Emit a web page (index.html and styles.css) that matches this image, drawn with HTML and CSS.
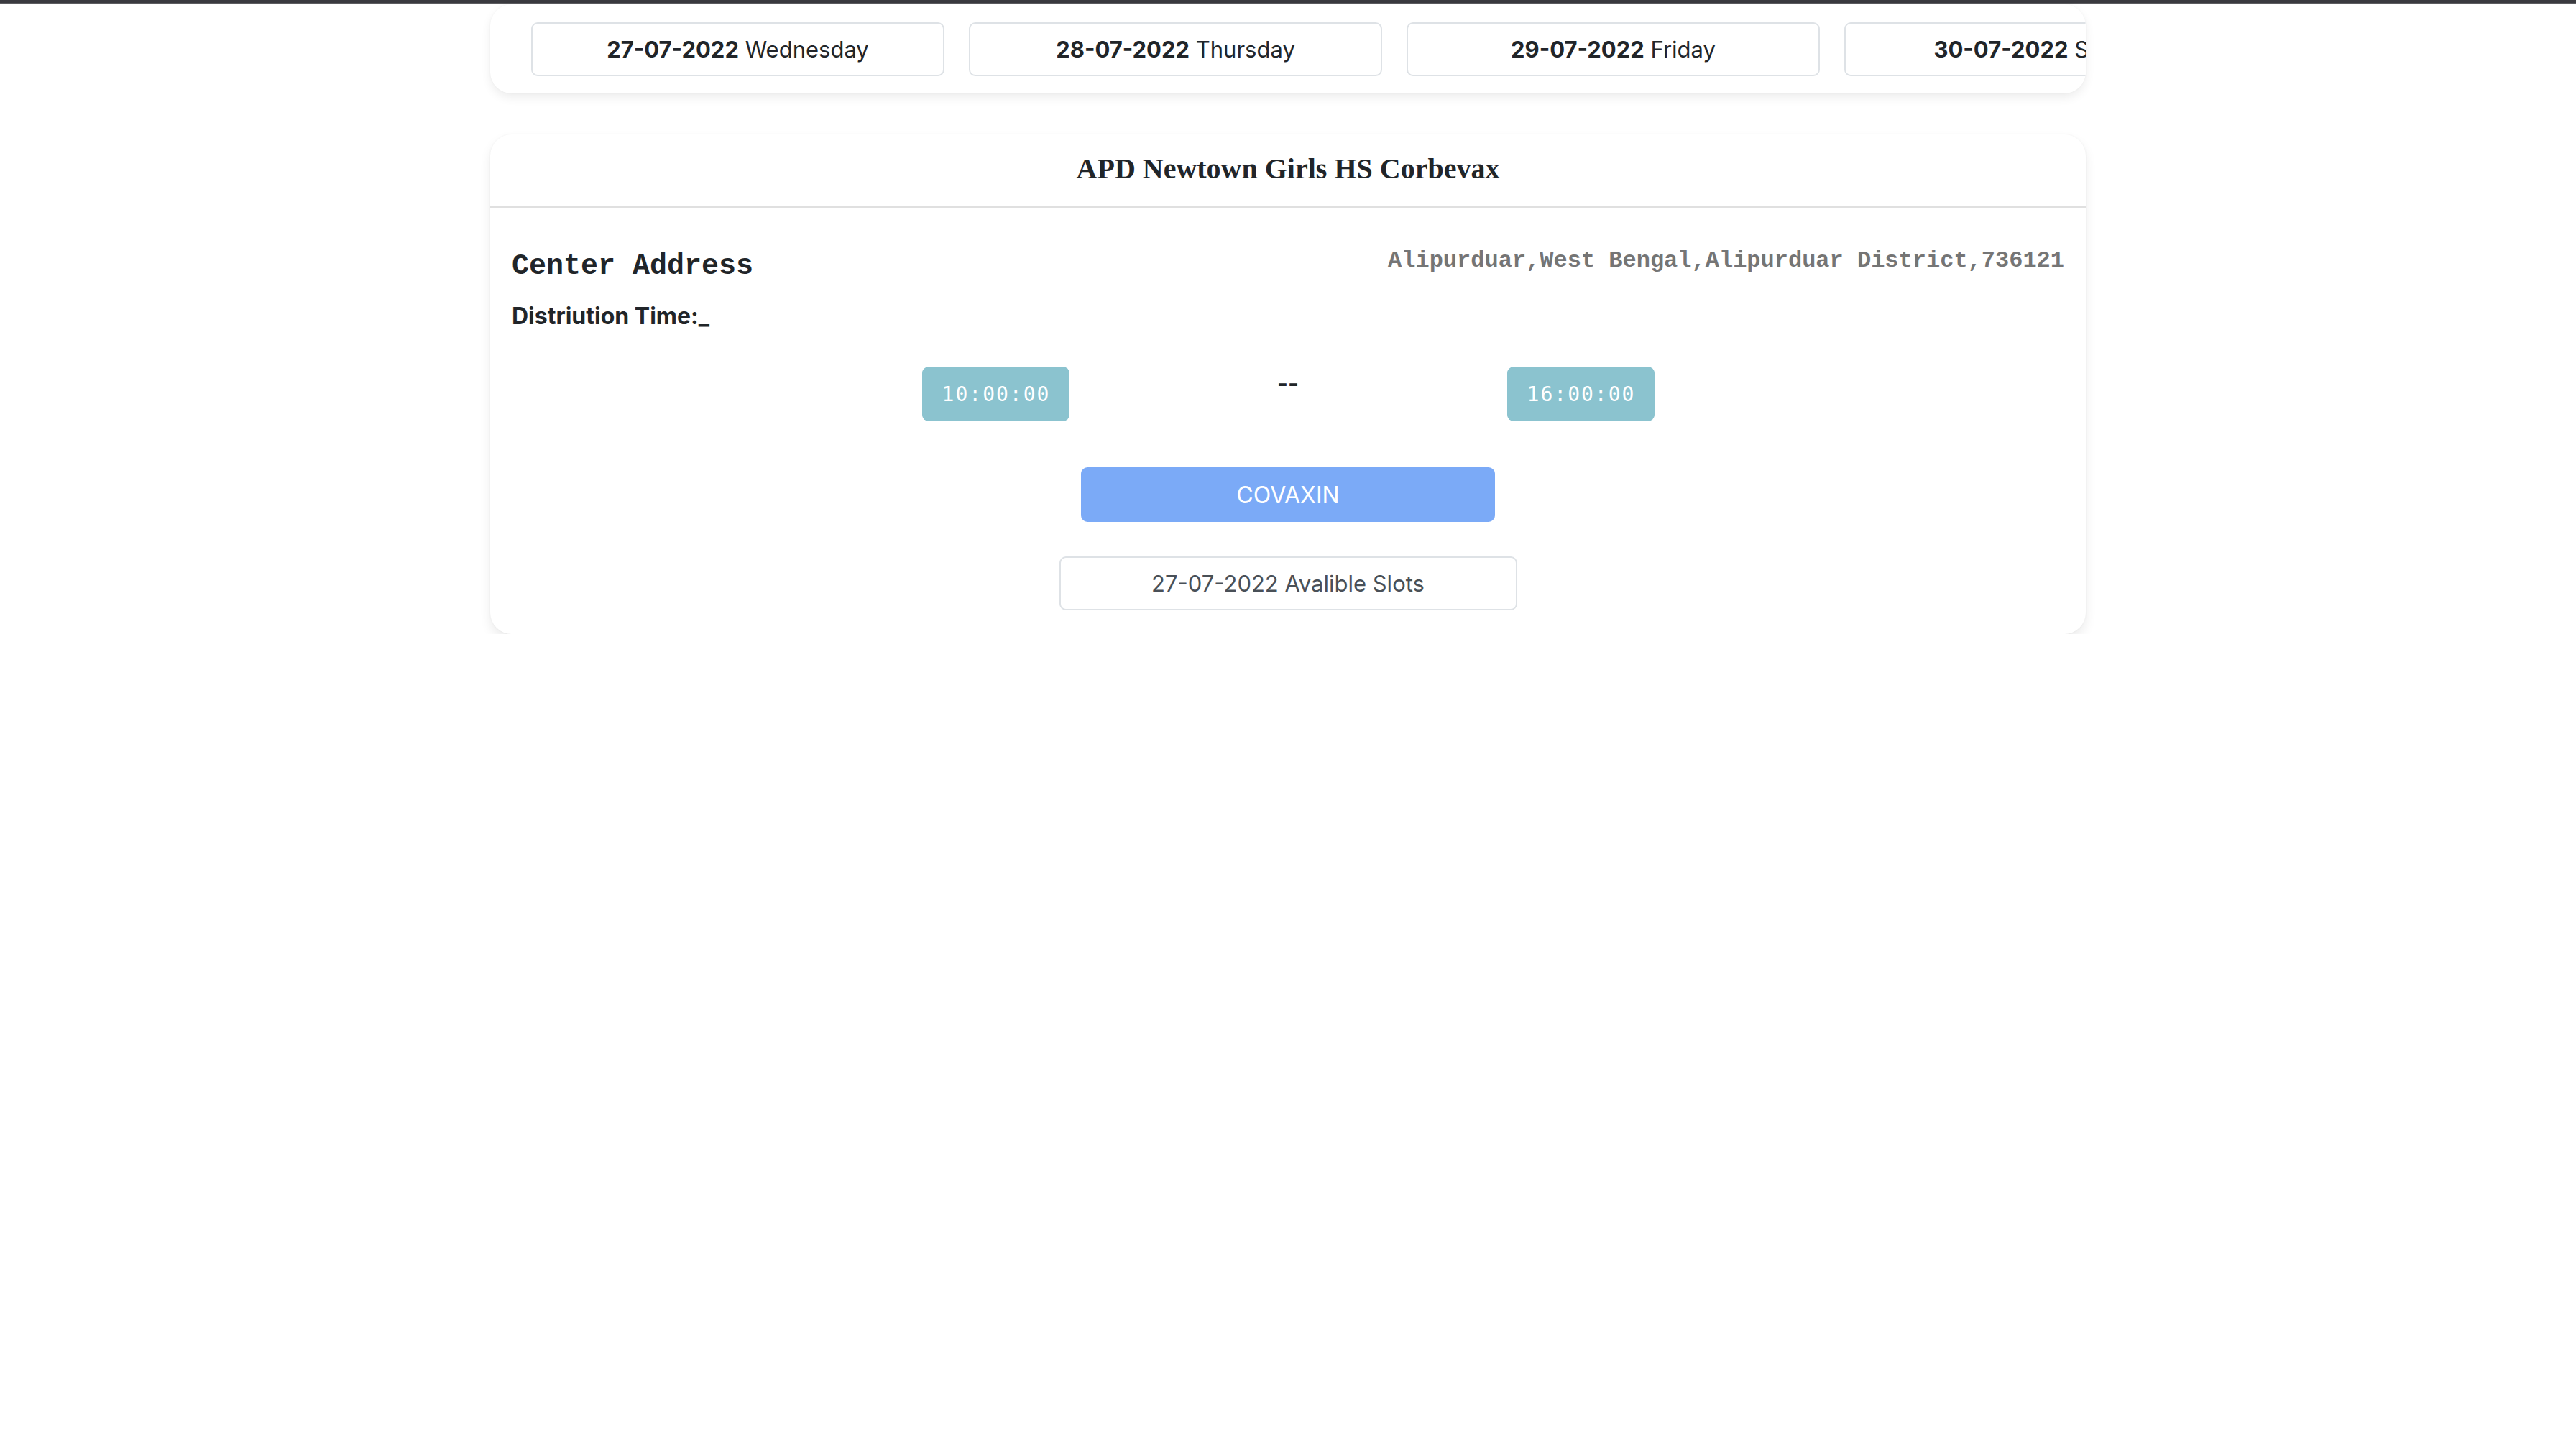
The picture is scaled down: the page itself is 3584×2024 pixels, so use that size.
FILE: index.html
```html
<!DOCTYPE html>
<html lang="en">
<head>
<meta charset="utf-8">
<title>Center Slots</title>
<link rel="stylesheet" href="styles.css">
</head>
<body>
<div class="topbar"></div>
<main class="container">
  <section class="date-strip">
    <button class="date-btn"><b>27-07-2022</b> Wednesday</button>
    <button class="date-btn"><b>28-07-2022</b> Thursday</button>
    <button class="date-btn"><b>29-07-2022</b> Friday</button>
    <button class="date-btn"><b>30-07-2022</b> Saturday</button>
  </section>

  <section class="center-card">
    <header class="center-header">
      <h5 class="center-title">APD Newtown Girls HS Corbevax</h5>
    </header>
    <div class="center-body">
      <div class="addr-row">
        <h4 class="addr-label">Center Address</h4>
        <p class="addr-text">Alipurduar,West Bengal,Alipurduar District,736121</p>
      </div>
      <p class="dist-time">Distriution Time:_</p>
      <div class="times">
        <span class="time-badge">10:00:00</span>
        <span class="dash">--</span>
        <span class="time-badge">16:00:00</span>
      </div>
      <div class="row-center">
        <button class="vaccine-btn">COVAXIN</button>
      </div>
      <div class="row-center slots-row">
        <button class="slots-btn">27-07-2022 Avalible Slots</button>
      </div>
    </div>
  </section>
</main>
</body>
</html>
```

FILE: styles.css
```css
* { box-sizing: border-box; }

html, body {
  margin: 0;
  padding: 0;
  background: #ffffff;
  font-family: Inter, "Noto Sans", "Liberation Sans", sans-serif;
  color: #212529;
}

.topbar {
  height: 6px;
  background: #3a3a3f;
  border-bottom: 2px solid #5c5c60;
}

.container {
  width: 2220px;
  margin: 0 auto;
}

.date-strip {
  display: flex;
  flex-wrap: nowrap;
  gap: 34px;
  overflow: hidden;
  padding: 25px 0 24px 57px;
  background: #fff;
  border-radius: 30px;
  box-shadow: 0 6px 14px rgba(0, 0, 0, 0.07), 0 0 3px rgba(0, 0, 0, 0.04);
}

.date-btn {
  flex: 0 0 575px;
  height: 75px;
  border: 2px solid #dee2e6;
  border-radius: 9px;
  background: #fff;
  font-family: inherit;
  font-size: 31px;
  color: #212529;
  display: flex;
  align-items: center;
  justify-content: center;
  white-space: pre;
  padding: 0;
}

.date-btn b { font-weight: 700; }

.center-card {
  margin-top: 57px;
  background: #fff;
  border-radius: 30px;
  box-shadow: 0 8px 16px rgba(0, 0, 0, 0.08), 0 0 3px rgba(0, 0, 0, 0.05);
}

.center-header {
  padding: 24px 0 28px;
  border-bottom: 2px solid #e0e0e0;
  text-align: center;
}

.center-title {
  margin: 0;
  font-family: "Liberation Serif", "Times New Roman", serif;
  font-weight: 700;
  font-size: 40px;
  line-height: 48px;
  color: #212529;
}

.center-body {
  padding: 31px 30px 33px;
}

.addr-row {
  display: flex;
  justify-content: space-between;
  align-items: flex-start;
}

.addr-label {
  margin: 27px 0 0;
  font-family: "Liberation Mono", "Courier New", monospace;
  font-weight: 700;
  font-size: 40px;
  line-height: 48px;
  color: #212529;
}

.addr-text {
  margin: 19px 0 0;
  font-family: "Liberation Mono", "Courier New", monospace;
  font-weight: 700;
  font-size: 32px;
  line-height: 48px;
  color: #757575;
}

.dist-time {
  margin: 21px 0 0;
  font-size: 32px;
  line-height: 48px;
  font-weight: 700;
  color: #212529;
}

.times {
  margin-top: 46px;
  display: grid;
  grid-template-columns: repeat(3, 407px);
  justify-content: center;
  justify-items: center;
  align-items: start;
}

.time-badge {
  width: 205px;
  height: 76px;
  display: flex;
  align-items: center;
  justify-content: center;
  background: #8bc3cf;
  border-radius: 9px;
  color: #fff;
  font-family: "DejaVu Sans Mono", "Liberation Mono", monospace;
  font-size: 28px;
  letter-spacing: 2px;
  padding-left: 2px;
}

.dash {
  font-size: 32px;
  line-height: 48px;
  font-weight: 700;
  color: #212529;
}

.row-center {
  display: flex;
  justify-content: center;
  margin-top: 64px;
}

.slots-row { margin-top: 48px; }

.vaccine-btn {
  width: 576px;
  height: 76px;
  border: none;
  border-radius: 9px;
  background: #7baaf7;
  color: #fff;
  font-family: inherit;
  font-size: 32px;
  padding: 0;
}

.slots-btn {
  width: 637px;
  height: 75px;
  border: 2px solid #dee2e6;
  border-radius: 9px;
  background: #fff;
  color: #495057;
  font-family: inherit;
  font-size: 31px;
  padding: 0;
}
```
